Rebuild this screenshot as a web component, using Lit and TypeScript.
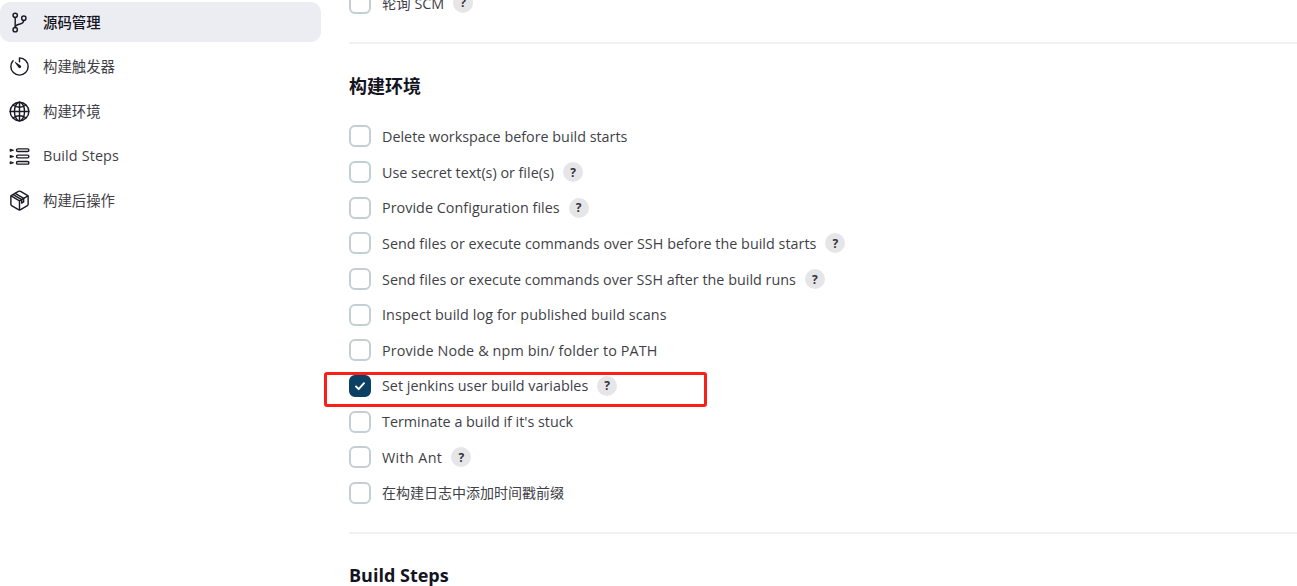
import { LitElement, html, css, svg } from "lit";
import { customElement } from "lit/decorators.js";

const icons: Record<string, unknown> = {
  branch: svg`<circle cx="160" cy="96" r="48"/><circle cx="160" cy="416" r="48"/><path d="M160 368V144"/><circle cx="352" cy="160" r="48"/><path d="M352 208c0 128-192 48-192 160"/>`,
  timer: svg`<path d="M112.91 128A191.85 191.85 0 0064 254c-1.18 106.35 85.65 193.8 192 194 106.2.2 192-85.83 192-192 0-104.54-83.55-189.61-187.5-192a4.36 4.36 0 00-4.5 4.37V152"/><path fill="currentColor" stroke="none" d="M233.38 278.63l-79-113a8.13 8.13 0 0111.32-11.32l113 79a32.5 32.5 0 01-37.25 53.26 33.21 33.21 0 01-8.07-7.94z"/>`,
  globe: svg`<path d="M256 48C141.13 48 48 141.13 48 256s93.13 208 208 208 208-93.13 208-208S370.87 48 256 48z"/><path d="M256 48c-58.07 0-112.67 93.13-112.67 208S197.93 464 256 464s112.67-93.13 112.67-208S314.07 48 256 48z"/><path d="M117.33 117.33c38.24 27.15 86.38 43.34 138.67 43.34s100.43-16.19 138.67-43.34"/><path d="M394.67 394.67c-38.24-27.15-86.38-43.34-138.67-43.34s-100.43 16.19-138.67 43.34"/><path d="M256 48v416M464 256H48"/>`,
  steps: svg`<rect x="190" y="86" width="274" height="60" rx="28"/><rect x="190" y="226" width="274" height="60" rx="28"/><rect x="190" y="366" width="274" height="60" rx="28"/><path stroke-width="26" d="M50 96l70 20-70 20zM50 236l70 20-70 20zM50 376l70 20-70 20z"/>`,
  box: svg`<path d="M448 341.37V170.61A32 32 0 00432.11 143l-152-88.46a47.94 47.94 0 00-48.24 0L79.89 143A32 32 0 0064 170.61v170.76A32 32 0 0079.89 369l152 88.46a48 48 0 0048.24 0l152-88.46A32 32 0 00448 341.37z"/><path d="M69 154l187 110 187-110M256 464V264"/><path d="M160 98l188 112v78l-44 26v-78L116 124"/>`,
};

const nav = [
  { icon: "branch", label: "源码管理", active: true },
  { icon: "timer", label: "构建触发器" },
  { icon: "globe", label: "构建环境" },
  { icon: "steps", label: "Build Steps", ls: 0.12 },
  { icon: "box", label: "构建后操作" },
];

interface Row {
  label: string;
  help?: boolean;
  checked?: boolean;
  cjk?: boolean;
  ls?: number;
}

const rows: Row[] = [
  { label: "Delete workspace before build starts" },
  { label: "Use secret text(s) or file(s)", help: true },
  { label: "Provide Configuration files", help: true, ls: 0.04 },
  { label: "Send files or execute commands over SSH before the build starts", help: true, ls: 0.03 },
  { label: "Send files or execute commands over SSH after the build runs", help: true, ls: 0.02 },
  { label: "Inspect build log for published build scans", ls: 0.09 },
  { label: "Provide Node & npm bin/ folder to PATH", ls: 0.13 },
  { label: "Set jenkins user build variables", help: true, checked: true },
  { label: "Terminate a build if it's stuck" },
  { label: "With Ant", help: true, ls: 0.35 },
  { label: "在构建日志中添加时间戳前缀", cjk: true },
];

@customElement("app-root")
export class AppRoot extends LitElement {
  static styles = css`
    :host {
      display: block;
      position: relative;
      height: 586px;
      overflow: hidden;
      background: #fff;
      color: #14141f;
      font-family: "Open Sans", "Noto Sans CJK SC", sans-serif;
      font-size: 14px;
    }
    .layout {
      display: grid;
      grid-template-columns: 321px 1fr;
      column-gap: 28px;
    }
    .side {
      display: flex;
      flex-direction: column;
      padding-top: 2px;
    }
    .item {
      height: 40px;
      margin-bottom: 4.7px;
      display: flex;
      align-items: center;
      gap: 12px;
      padding-left: 8px;
      border-radius: 10px;
      color: #3f3f48;
      font-size: 14.4px;
    }
    .item span {
      padding-bottom: 2px;
    }
    .item.active {
      background: #ecedf2;
      color: #14141f;
      font-weight: 500;
    }
    .ico {
      width: 23px;
      height: 23px;
      flex: none;
      fill: none;
      stroke: currentColor;
      stroke-width: 32;
      stroke-linecap: round;
      stroke-linejoin: round;
      color: #1a1a24;
    }
    .main {
      margin-top: -15px;
      min-width: 0;
    }
    .row {
      height: 35.65px;
      display: flex;
      align-items: center;
      gap: 9px;
      color: #3f3f48;
      white-space: nowrap;
      font-size: 14.35px;
    }
    .row.cjk {
      font-size: 14px;
    }
    .row.cjk .lbl {
      padding-bottom: 2px;
    }
    .row .lbl {
      margin-left: 2px;
    }
    .box {
      width: 22px;
      height: 22px;
      box-sizing: border-box;
      flex: none;
      border: 2px solid #c3cfd3;
      border-radius: 6px;
      background: #fff;
      display: flex;
      align-items: center;
      justify-content: center;
    }
    .box.on {
      background: #0b3f63;
      border-color: #0b3f63;
    }
    .box svg {
      width: 14px;
      height: 14px;
      fill: none;
      stroke: #fff;
      stroke-width: 1.9;
      stroke-linecap: round;
      stroke-linejoin: round;
    }
    .help {
      width: 20px;
      height: 20px;
      border-radius: 50%;
      background: #e6e6e9;
      color: #33333d;
      font-size: 12px;
      font-weight: 700;
      display: flex;
      align-items: center;
      justify-content: center;
    }
    .rule {
      height: 2px;
      background: #f1f1f4;
    }
    .first {
      margin-bottom: 21px;
    }
    h2 {
      margin: 29px 0 0;
      font-size: 18px;
      line-height: 26px;
      font-weight: 700;
      color: #14141f;
    }
    .env {
      margin-top: 20px;
    }
    .end {
      margin-top: 21px;
      margin-bottom: 28px;
    }
    .after {
      margin-top: 0;
    }
    .mark {
      position: absolute;
      left: 324px;
      top: 372px;
      width: 383px;
      height: 35px;
      box-sizing: border-box;
      border: 3px solid #fb1f17;
      border-radius: 3px;
      pointer-events: none;
    }
  `;

  private box(on = false) {
    return html`<span class="box ${on ? "on" : ""}">${on
      ? html`<svg viewBox="0 0 14 14"><path d="M3 7.5l2.7 2.7 5.3-6"/></svg>`
      : ""}</span>`;
  }

  private row(r: Row) {
    return html`<div class="row ${r.cjk ? "cjk" : ""}">
      ${this.box(r.checked)}<span class="lbl" style="letter-spacing:${r.ls ?? 0}px">${r.label}</span>
      ${r.help ? html`<span class="help">?</span>` : ""}
    </div>`;
  }

  render() {
    return html`
      <div class="layout">
        <nav class="side">
          ${nav.map(
            (n) => html`<div class="item ${n.active ? "active" : ""}">
              <svg class="ico" viewBox="0 0 512 512">${icons[n.icon]}</svg>
              <span style="letter-spacing:${n.ls ?? 0}px">${n.label}</span>
            </div>`
          )}
        </nav>
        <main class="main">
          <div class="first">${this.row({ label: "轮询 SCM", help: true })}</div>
          <div class="rule"></div>
          <h2>构建环境</h2>
          <div class="env">${rows.map((r) => this.row(r))}</div>
          <div class="rule end"></div>
          <h2 class="after">Build Steps</h2>
        </main>
      </div>
      <div class="mark"></div>
    `;
  }
}
